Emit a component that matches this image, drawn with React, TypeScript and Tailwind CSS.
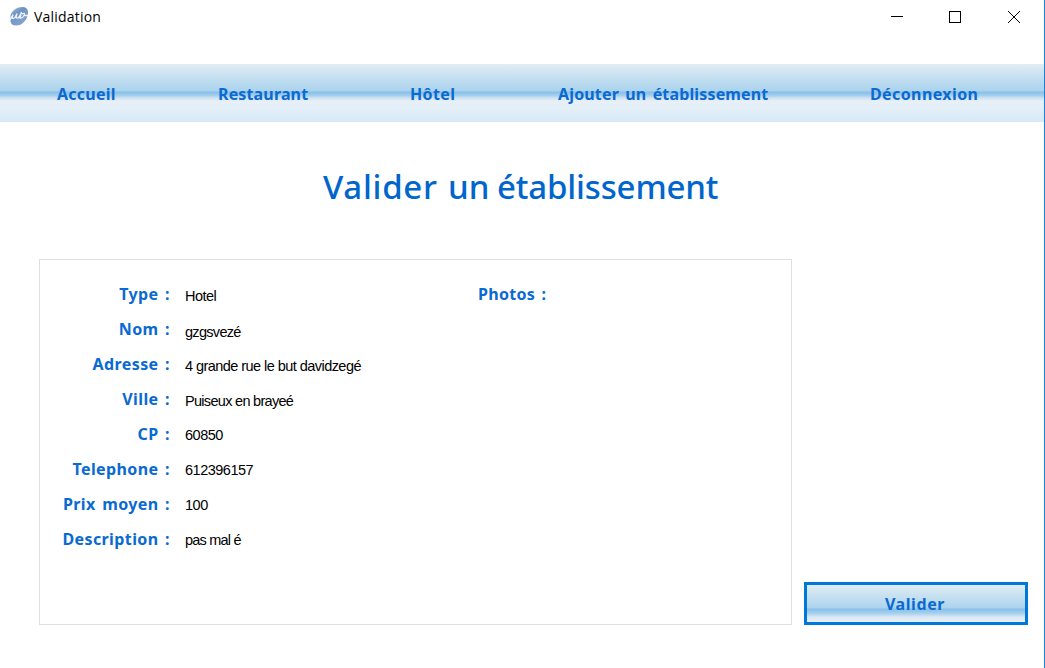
const navItems = [
  { label: 'Accueil', cls: 'ml-[57px] w-[161px] tracking-[0.25px]' },
  { label: 'Restaurant', cls: 'w-[192px] tracking-[0.15px]' },
  { label: 'Hôtel', cls: 'w-[148px] tracking-[0.35px]' },
  { label: 'Ajouter un établissement', cls: 'w-[312px] tracking-[0.15px] [word-spacing:2px]' },
  { label: 'Déconnexion', cls: 'tracking-[0.4px]' },
];

const fields = [
  { label: 'Type', value: 'Hotel', cls: 'pt-[4px] tracking-[-0.550px]' },
  { label: 'Nom', value: 'gzgsvezé', cls: 'pt-[5px] tracking-[-0.700px]' },
  { label: 'Adresse', value: '4 grande rue le but davidzegé', cls: 'pt-[4px] tracking-[-0.550px]' },
  { label: 'Ville', value: 'Puiseux en brayeé', cls: 'pt-[4px] tracking-[-0.700px]' },
  { label: 'CP', value: '60850', cls: 'pt-[3px] tracking-[-0.500px]' },
  { label: 'Telephone', value: '612396157', cls: 'pt-[3px] tracking-[-0.500px]' },
  { label: 'Prix moyen', value: '100', cls: 'pt-[3px] tracking-[-0.500px]' },
  { label: 'Description', value: 'pas mal é', cls: 'pt-[3px] tracking-[-0.800px]' },
];

function AppLogo() {
  return (
    <svg width="20" height="20" viewBox="0 0 20 20" className="ml-[9px] mt-[6px] shrink-0">
      <defs>
        <linearGradient id="logo" x1="0" y1="0" x2="0.6" y2="1">
          <stop offset="0" stopColor="#a9c3dd" />
          <stop offset="0.4" stopColor="#6f93c1" />
          <stop offset="1" stopColor="#86a5cc" />
        </linearGradient>
      </defs>
      <path d="M1.500 9C3.500 4 8 1 13 1c4 0 6 2 6 5.500 0 3-1 6.500-4 9.500-2 2.500-5 3.500-8 3.500-3.500 0-5-1.500-5.500-4z" fill="url(#logo)" />
      <path d="M1 14L4 8.500 3.200 12q1.500 1.200 3-1L8 7.500 7 11.500q1.500 1.500 3.500-1L12.500 6l-1.500 6q2.500.5 4-2.500c1-2 .5-2.500-2-1.500M15 9.500h4" fill="none" stroke="#edf3fa" strokeWidth="1.300" />
    </svg>
  );
}

export default function App() {
  return (
    <div className="flex h-[668px] w-[1045px] flex-col overflow-hidden border-r border-[#1883d7] bg-white font-['Noto_Sans',sans-serif] text-[#0a6ad2]">
      <header className="flex h-16 shrink-0 items-start text-black">
        <AppLogo />
        <span className="ml-[5px] mt-[7px] font-['Open_Sans',sans-serif] text-[14px] leading-5 tracking-[0.2px]">Validation</span>
        <svg width="130" height="14" viewBox="0 0 130 14" className="ml-auto mr-[24px] mt-[10px]" fill="none" stroke="#000" shapeRendering="crispEdges">
          <path d="M1 6.500H13" />
          <rect x="59.500" y="1.500" width="11" height="11" />
          <path d="M118 1l12 12M130 1l-12 12" shapeRendering="auto" />
        </svg>
      </header>

      <nav className="flex h-[58px] shrink-0 items-center whitespace-nowrap bg-[linear-gradient(180deg,#e2edf4_0px,#c3dff0_14px,#abd3ee_27px,#86c0e8_28px,#9ecbec_31px,#cfe2f2_34px,#e8eff6_37px,#e3eff8_45px,#d6e9f8_58px)] pt-[2px] text-[16px] font-bold">
        {navItems.map((n) => (
          <a key={n.label} className={n.cls}>{n.label}</a>
        ))}
      </nav>

      <h1 className="mt-[40px] flex h-[50px] shrink-0 pl-[323px] text-[33px] font-medium leading-[49px] whitespace-pre text-[#0066cc]">
        <span className="w-[125px] tracking-[0.7px]">Valider </span>
        <span className="w-[49px]">un </span>
        <span className="tracking-[-0.15px]">établissement</span>
      </h1>

      <main className="mt-[47px] flex items-end">
        <section className="ml-[39px] flex h-[366px] w-[753px] border border-[#dfdfdf] pl-px pt-[19px]">
          <dl className="w-[437px]">
            {fields.map((f) => (
              <div key={f.label} className="flex h-[35px] whitespace-nowrap">
                <dt className="w-[129px] text-right text-[16px] font-bold leading-[30px] tracking-[0.4px] [word-spacing:2px]">{f.label} :</dt>
                <dd className={`ml-[15px] font-['Liberation_Sans',sans-serif] text-[14.500px] leading-[27px] text-black ${f.cls}`}>{f.value}</dd>
              </div>
            ))}
          </dl>
          <h2 className="text-[16px] font-bold leading-[30px] tracking-[0.3px] [word-spacing:2px]">Photos :</h2>
        </section>
        <button className="ml-[12px] h-[43px] w-[224px] border-[3px] border-[#0078d7] bg-[linear-gradient(180deg,#dfebf3_0px,#c3dff0_13px,#abd3ee_23px,#86c0e8_24px,#a3ceec_28px,#dbe8f4_32px,#e8eff6_37px)] pr-[2px] text-[16px] font-bold tracking-[0.6px]">
          Valider
        </button>
      </main>
    </div>
  );
}
